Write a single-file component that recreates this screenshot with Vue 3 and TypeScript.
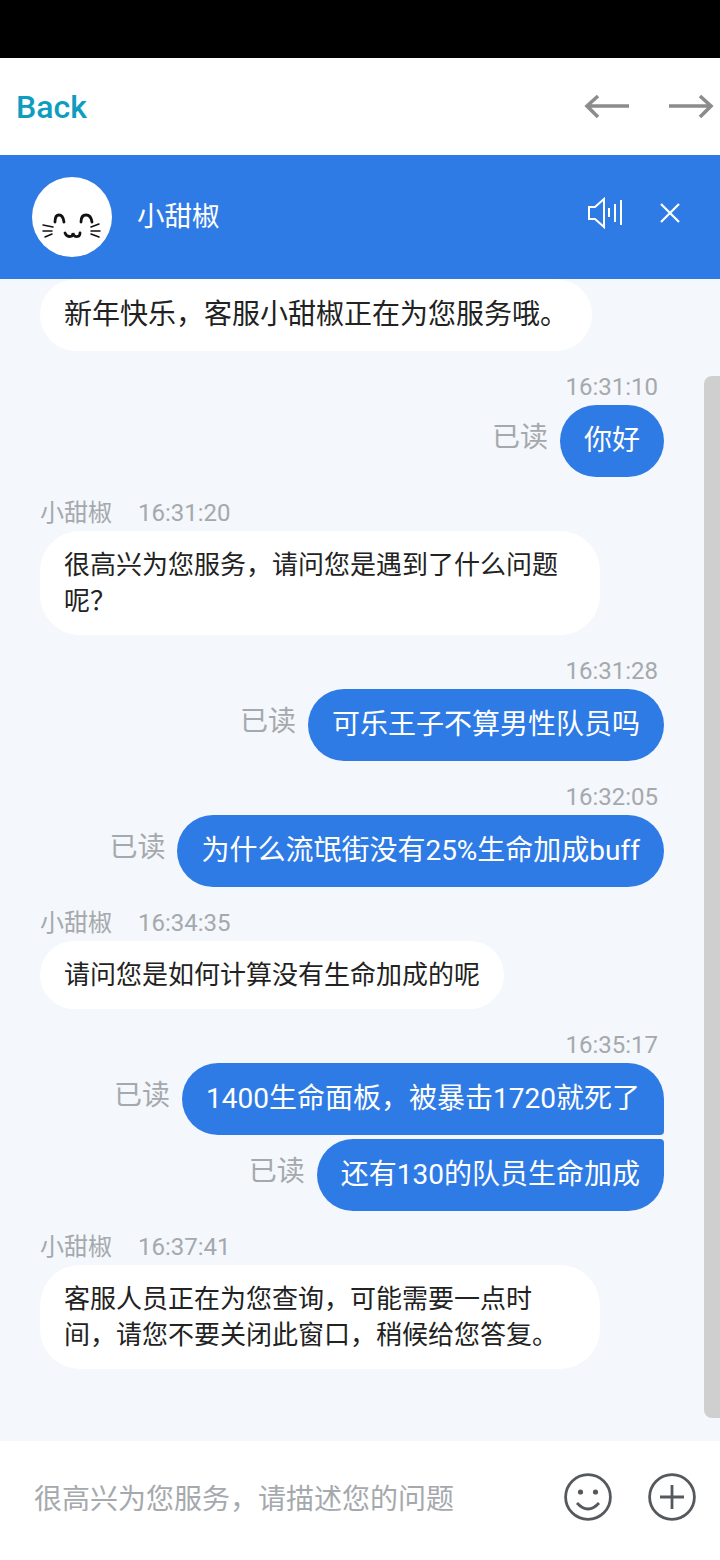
<template>
  <div class="phone">
    <div class="status"></div>
    <div class="nav">
      <span class="back">Back</span>
      <div class="arrows">
        <svg width="46" height="26" viewBox="0 0 46 26" fill="none" stroke="#8c8c8c" stroke-width="3.6">
          <path d="M3 12H45M14 2L3 12L14 23" />
        </svg>
        <svg width="46" height="26" viewBox="0 0 46 26" fill="none" stroke="#8c8c8c" stroke-width="3.6">
          <path d="M1 12H43M32 2L43 12L32 23" />
        </svg>
      </div>
    </div>
    <div class="header">
      <div class="avatar">
        <svg width="80" height="80" viewBox="0 0 80 80" fill="none" stroke="#111" stroke-width="2.8" stroke-linecap="round">
          <path d="M23 45Q23 38 27 38Q31 38 32 45M49 45Q49 38 54 38Q59 38 60 45" />
          <path d="M33 56Q35 61 40 59Q41 57 41 56Q42 61 47 59Q48 58 48 56" />
          <path d="M11 48L21 50M11 54L20 54M13 60L20 57M59 50L67 47M59 54L68 54M59 57L67 60" stroke-width="1.5" />
        </svg>
      </div>
      <span class="agent">小甜椒</span>
      <svg class="sound" width="36" height="32" viewBox="0 0 36 32" fill="none" stroke="#fff" stroke-width="2">
        <path d="M2 10H8L17 2V30L8 22H2Z" />
        <path d="M22 11V20M28 7V25M34 3V28" />
      </svg>
      <svg class="close" width="24" height="24" viewBox="0 0 24 24" fill="none" stroke="#fff" stroke-width="2.2">
        <path d="M3 3L21 21M21 3L3 21" />
      </svg>
    </div>
    <div class="chat">
      <div class="scrollbar"></div>
      <template v-for="(m, i) in messages" :key="i">
        <div v-if="m.from === 'agent'" class="agent-msg" :class="m.cls">
          <div v-if="m.time" class="agent-meta"><span>小甜椒</span><span>{{ m.time }}</span></div>
          <div class="bubble left" :class="m.bubble">{{ m.text }}</div>
        </div>
        <div v-else class="user-msg" :class="m.cls">
          <div v-if="m.time" class="user-time">{{ m.time }}</div>
          <div class="user-row">
            <span class="read">已读</span>
            <div class="bubble right" :class="m.bubble">{{ m.text }}</div>
          </div>
        </div>
      </template>
    </div>
    <div class="input-bar">
      <span class="placeholder">很高兴为您服务，请描述您的问题</span>
      <svg class="smile" width="48" height="48" viewBox="0 0 48 48" fill="none" stroke="#55595d" stroke-width="2.8">
        <circle cx="24" cy="24" r="22.4" />
        <circle cx="16.500" cy="19" r="2.600" fill="#55595d" stroke="none" />
        <circle cx="31.500" cy="19" r="2.600" fill="#55595d" stroke="none" />
        <path d="M13 30Q24 42 35 30" />
      </svg>
      <svg width="48" height="48" viewBox="0 0 48 48" fill="none" stroke="#55595d" stroke-width="2.8">
        <circle cx="24" cy="24" r="22.4" />
        <path d="M12 24H36M24 12V36" />
      </svg>
    </div>
  </div>
</template>

<script setup lang="ts">
interface Message {
  from: 'agent' | 'user'
  text: string
  time?: string
  cls?: string
  bubble?: string
}

const messages: Message[] = [
  { from: 'agent', text: '新年快乐，客服小甜椒正在为您服务哦。', cls: 'first', bubble: 'welcome' },
  { from: 'user', text: '你好', time: '16:31:10' },
  { from: 'agent', text: '很高兴为您服务，请问您是遇到了什么问题呢？', time: '16:31:20', bubble: 'wide' },
  { from: 'user', text: '可乐王子不算男性队员吗', time: '16:31:28' },
  { from: 'user', text: '为什么流氓街没有25%生命加成buff', time: '16:32:05' },
  { from: 'agent', text: '请问您是如何计算没有生命加成的呢', time: '16:34:35', bubble: 'short' },
  { from: 'user', text: '1400生命面板，被暴击1720就死了', time: '16:35:17', bubble: 'top' },
  { from: 'user', text: '还有130的队员生命加成', cls: 'next', bubble: 'bottom' },
  { from: 'agent', text: '客服人员正在为您查询，可能需要一点时间，请您不要关闭此窗口，稍候给您答复。', time: '16:37:41', bubble: 'wide' },
]
</script>

<style>
html,
body {
  margin: 0;
  background: #fff;
}
</style>

<style scoped>
.phone {
  width: 720px;
  height: 1560px;
  display: flex;
  flex-direction: column;
  font-family: Roboto, "Noto Sans CJK SC", sans-serif;
  overflow: hidden;
}

.status {
  height: 58px;
  background: #000;
}

.nav {
  height: 97px;
  background: #fff;
  display: flex;
  align-items: center;
  justify-content: space-between;
  padding: 0 6px 0 16px;
}

.back {
  color: #0e9cc0;
  font-size: 32px;
  font-weight: 500;
}

.arrows {
  display: flex;
  gap: 38px;
}

.header {
  height: 124px;
  background: #2f7be6;
  display: flex;
  align-items: center;
  padding: 0 38px 0 32px;
  color: #fff;
}

.avatar {
  width: 80px;
  height: 80px;
  border-radius: 50%;
  background: #fff;
}

.agent {
  font-size: 27.500px;
  margin-left: 25px;
  margin-bottom: 6px;
  flex: 1;
}

.sound {
  margin-right: 35px;
  margin-bottom: 8px;
}

.close {
  margin-bottom: 8px;
}

.chat {
  position: relative;
  height: 1162px;
  box-sizing: border-box;
  background: #f4f7fb;
  padding: 0 56px 0 40px;
  overflow: hidden;
}

.scrollbar {
  position: absolute;
  right: 0;
  top: 97px;
  width: 16px;
  height: 1042px;
  background: #cfcfcf;
  border-radius: 8px 0 0 8px;
}

.bubble {
  box-sizing: border-box;
  font-size: 26px;
  line-height: 36px;
  padding: 16px 24px;
  border-radius: 36px;
  color: #222;
}

.left {
  background: #fff;
  max-width: 560px;
}

.welcome {
  width: 552px;
  font-size: 28px;
  line-height: 40px;
}

.wide {
  width: 560px;
  border-radius: 40px;
}

.short {
  width: fit-content;
}

.right {
  background: #2f7be6;
  color: #fff;
  font-size: 28px;
  line-height: 40px;
}

.top {
  border-bottom-right-radius: 4px;
}

.bottom {
  border-top-right-radius: 4px;
}

.agent-msg {
  margin-top: 18px;
}

.agent-msg.first {
  margin-top: 0;
}

.agent-meta {
  display: flex;
  gap: 26px;
  color: #a5a9ad;
  font-size: 24px;
  line-height: 36px;
}

.user-msg {
  margin-top: 18px;
}

.user-msg.next {
  margin-top: 4px;
}

.user-time {
  color: #a5a9ad;
  font-size: 24px;
  line-height: 36px;
  text-align: right;
  padding-right: 6px;
}

.user-row {
  display: flex;
  justify-content: flex-end;
  align-items: flex-start;
  gap: 12px;
}

.read {
  color: #a5a9ad;
  font-size: 28px;
  line-height: 40px;
  margin-top: 13px;
}

.input-bar {
  flex: 1;
  background: #fff;
  display: flex;
  align-items: center;
  padding: 0 24px 8px 34px;
}

.placeholder {
  flex: 1;
  color: #a5a9ad;
  font-size: 28px;
}

.smile {
  margin-right: 36px;
}
</style>
